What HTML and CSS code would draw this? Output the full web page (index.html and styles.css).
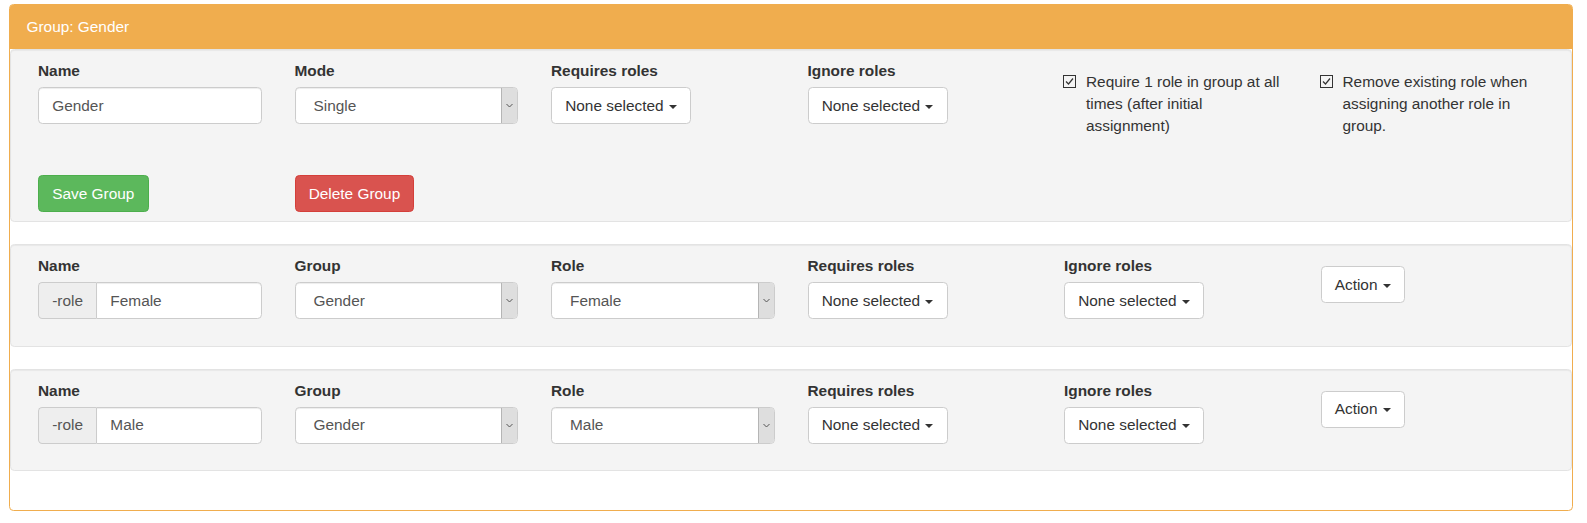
FILE: index.html
```html
<!DOCTYPE html>
<html>
<head>
<meta charset="utf-8">
<title>Group: Gender</title>
<link rel="stylesheet" href="styles.css">
</head>
<body>
<div class="page">
  <div class="panel">
    <div class="panel-heading">Group: Gender</div>
    <div class="panel-body">

      <div class="well">
        <div class="grid">
          <div class="field">
            <div class="label">Name</div>
            <input class="input" type="text" value="Gender">
          </div>
          <div class="field">
            <div class="label">Mode</div>
            <div class="select"><span class="select-text">Single</span><span class="select-arrow"><svg width="7" height="5" viewBox="0 0 7 5"><path d="M0.5 1 L3.5 4 L6.5 1" fill="none" stroke="#555" stroke-width="1"/></svg></span></div>
          </div>
          <div class="field">
            <div class="label">Requires roles</div>
            <button class="btn btn-default">None selected <span class="caret"></span></button>
          </div>
          <div class="field">
            <div class="label">Ignore roles</div>
            <button class="btn btn-default">None selected <span class="caret"></span></button>
          </div>
          <div class="check">
            <svg class="box" width="13" height="13" viewBox="0 0 13 13"><rect x="0.5" y="0.5" width="12" height="12" fill="none" stroke="#333"/><path d="M3 6.5 L5.5 9 L10 3.5" fill="none" stroke="#333" stroke-width="1.2"/></svg>
            <span class="check-text">Require 1 role in group at all times (after initial assignment)</span>
          </div>
          <div class="check">
            <svg class="box" width="13" height="13" viewBox="0 0 13 13"><rect x="0.5" y="0.5" width="12" height="12" fill="none" stroke="#333"/><path d="M3 6.5 L5.5 9 L10 3.5" fill="none" stroke="#333" stroke-width="1.2"/></svg>
            <span class="check-text">Remove existing role when assigning another role in group.</span>
          </div>
        </div>
        <div class="grid actions-row">
          <div><button class="btn btn-success">Save Group</button></div>
          <div><button class="btn btn-danger">Delete Group</button></div>
        </div>
      </div>

      <div class="well">
        <div class="grid">
          <div class="field">
            <div class="label">Name</div>
            <div class="input-group"><span class="addon">-role</span><input class="input grouped" type="text" value="Female"></div>
          </div>
          <div class="field">
            <div class="label">Group</div>
            <div class="select"><span class="select-text">Gender</span><span class="select-arrow"><svg width="7" height="5" viewBox="0 0 7 5"><path d="M0.5 1 L3.5 4 L6.5 1" fill="none" stroke="#555" stroke-width="1"/></svg></span></div>
          </div>
          <div class="field">
            <div class="label">Role</div>
            <div class="select"><span class="select-text">Female</span><span class="select-arrow"><svg width="7" height="5" viewBox="0 0 7 5"><path d="M0.5 1 L3.5 4 L6.5 1" fill="none" stroke="#555" stroke-width="1"/></svg></span></div>
          </div>
          <div class="field">
            <div class="label">Requires roles</div>
            <button class="btn btn-default">None selected <span class="caret"></span></button>
          </div>
          <div class="field">
            <div class="label">Ignore roles</div>
            <button class="btn btn-default">None selected <span class="caret"></span></button>
          </div>
          <div class="action">
            <button class="btn btn-default">Action <span class="caret"></span></button>
          </div>
        </div>
      </div>

      <div class="well">
        <div class="grid">
          <div class="field">
            <div class="label">Name</div>
            <div class="input-group"><span class="addon">-role</span><input class="input grouped" type="text" value="Male"></div>
          </div>
          <div class="field">
            <div class="label">Group</div>
            <div class="select"><span class="select-text">Gender</span><span class="select-arrow"><svg width="7" height="5" viewBox="0 0 7 5"><path d="M0.5 1 L3.5 4 L6.5 1" fill="none" stroke="#555" stroke-width="1"/></svg></span></div>
          </div>
          <div class="field">
            <div class="label">Role</div>
            <div class="select"><span class="select-text">Male</span><span class="select-arrow"><svg width="7" height="5" viewBox="0 0 7 5"><path d="M0.5 1 L3.5 4 L6.5 1" fill="none" stroke="#555" stroke-width="1"/></svg></span></div>
          </div>
          <div class="field">
            <div class="label">Requires roles</div>
            <button class="btn btn-default">None selected <span class="caret"></span></button>
          </div>
          <div class="field">
            <div class="label">Ignore roles</div>
            <button class="btn btn-default">None selected <span class="caret"></span></button>
          </div>
          <div class="action">
            <button class="btn btn-default">Action <span class="caret"></span></button>
          </div>
        </div>
      </div>

    </div>
  </div>
</div>
</body>
</html>
```
FILE: styles.css
```css
* { box-sizing: border-box; }
html, body { margin: 0; padding: 0; background: #fff; }
body {
  font-family: "Liberation Sans", Arial, Helvetica, sans-serif;
  font-size: 15.4px;
  line-height: 22px;
  color: #333;
}
.page { padding: 4px 14px 0 9px; }
.panel {
  border: 1px solid #f0ad4e;
  border-radius: 4.4px;
  background: #fff;
}
.panel-heading {
  background: #f0ad4e;
  color: #fff;
  padding: 11px 16.5px;
  line-height: 22px;
  border-radius: 3px 3px 0 0;
}
.panel-body { padding: 0 0 16.5px; }
.well {
  background: #f4f4f4;
  border: 1px solid #e3e3e3;
  border-radius: 4.4px;
  box-shadow: inset 0 1px 1px rgba(0,0,0,0.05);
  padding: 10px 27px 9px;
  margin-bottom: 22px;
}
.grid {
  display: grid;
  grid-template-columns: repeat(6, 1fr);
  column-gap: 33px;
  align-items: start;
}
.field { margin-bottom: 17.5px; }
.label {
  font-weight: bold;
  line-height: 22px;
  margin-bottom: 5px;
}
.input {
  display: block;
  width: 100%;
  height: 37px;
  padding: 6.6px 13.2px;
  font: inherit;
  line-height: 22px;
  color: #555;
  background: #fff;
  border: 1px solid #ccc;
  border-radius: 4.4px;
  box-shadow: inset 0 1px 1px rgba(0,0,0,0.075);
  outline: none;
}
.input-group { display: flex; width: 100%; }
.addon {
  flex: 0 0 auto;
  height: 37px;
  padding: 6.6px 13.2px;
  line-height: 22px;
  color: #555;
  background: #eee;
  border: 1px solid #ccc;
  border-right: 0;
  border-radius: 4.4px 0 0 4.4px;
  text-align: center;
}
.input.grouped {
  flex: 1 1 auto;
  min-width: 0;
  border-radius: 0 4.4px 4.4px 0;
}
.select {
  display: flex;
  height: 37px;
  background: #fff;
  border: 1px solid #ccc;
  border-radius: 4.4px;
  box-shadow: inset 0 1px 1px rgba(0,0,0,0.075);
  color: #555;
  overflow: hidden;
}
.select-text {
  flex: 1 1 auto;
  padding: 6.6px 0 0 18px;
  line-height: 22px;
}
.select-arrow {
  flex: 0 0 16px;
  display: flex;
  align-items: center;
  justify-content: center;
  background: #dedede;
  border-left: 1px solid #b5b5b5;
}
.btn {
  display: inline-block;
  height: 37px;
  padding: 6.6px 13.2px;
  font: inherit;
  line-height: 22px;
  border: 1px solid transparent;
  border-radius: 4.4px;
  white-space: nowrap;
  cursor: pointer;
}
.btn-default { color: #333; background: #fff; border-color: #ccc; }
.btn-success { color: #fff; background: #5cb85c; border-color: #4cae4c; }
.btn-danger { color: #fff; background: #d9534f; border-color: #d43f3a; }
.caret {
  display: inline-block;
  width: 0;
  height: 0;
  margin-left: 1px;
  vertical-align: middle;
  border-top: 4.4px solid #333;
  border-left: 4.4px solid transparent;
  border-right: 4.4px solid transparent;
}
.check {
  display: flex;
  align-items: flex-start;
  padding: 11px 0;
  margin-left: -1px;
}
.check .box { flex: 0 0 13px; margin-top: 4px; margin-right: 10px; }
.check-text { flex: 1 1 auto; }
.actions-row { margin-top: 27px; }
.action { padding-top: 11px; }
```
